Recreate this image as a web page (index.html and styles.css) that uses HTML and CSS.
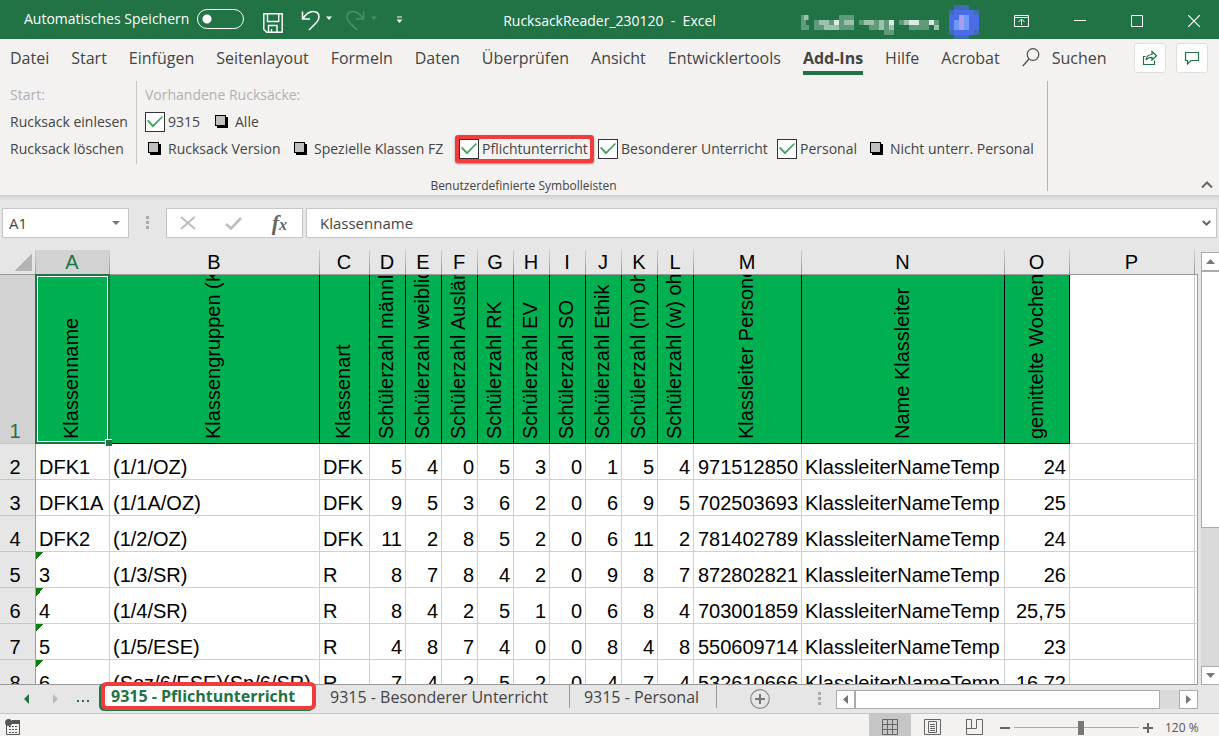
FILE: index.html
```html
<!DOCTYPE html>
<html lang="de">
<head>
<meta charset="utf-8">
<title>RucksackReader_230120 - Excel</title>
<link rel="stylesheet" href="styles.css">
</head>
<body>
<header class="titlebar">
  <div class="quick">
    <label class="autosave">Automatisches Speichern <input type="checkbox" class="switch"></label>
    <button class="icon-btn save" aria-label="Speichern"><svg width="20" height="20" viewBox="0 0 20 20"><path d="M.8.8h18.4v18.4H3.6L.8 16.400zM4.500 1v7.500h11.200V1M5.500 19v-6.500h8.500V19M8.500 19v-3" fill="none" stroke="#fff" stroke-width="1.400"/></svg></button>
    <button class="icon-btn undo" aria-label="Rückgängig"><svg width="32" height="21" viewBox="0 0 32 21"><path d="M1.500 1.500v7.500h7.500M2 8.500C5 4 8 1.500 12 1.500c4 0 6 2.500 6 5.500 0 3-1 4-3 6l-7 7" fill="none" stroke="#fff" stroke-width="1.500"/><path d="M25 6.500h6l-3 3.500z" fill="#fff"/></svg></button>
    <button class="icon-btn redo" aria-label="Wiederholen"><svg width="32" height="21" viewBox="0 0 32 21"><path d="M17.500 1.500v7.500H10M17 8.500C14 4 11 1.500 7 1.500c-4 0-6 2.500-6 5.500 0 3 1 4 3 6l7 7" fill="none" stroke="#4d8f6a" stroke-width="1.500"/><path d="M25 6.500h6l-3 3.500z" fill="#4d8f6a"/></svg></button>
    <button class="icon-btn" aria-label="Symbolleiste anpassen"><svg width="7" height="8" viewBox="0 0 7 8"><path d="M1 1h5" stroke="#fff"/><path d="M.5 3.500h6L3.500 7z" fill="#fff"/></svg></button>
  </div>
  <h1 class="doc-title">RucksackReader_230120&nbsp; - &nbsp;Excel</h1>
  <div class="window-side">
    <button class="account" aria-label="Konto">
      <svg width="181" height="36" viewBox="0 0 181 36" shape-rendering="crispEdges">
        <g fill="#5f9a7b"><path d="M0 10h8v5H0zM0 15h5v5H0zM0 20h8v5H0zM13 15h40v10H13zM38 10h15v5H38zM58 15h35v5H58zM68 20h25v5H68zM83 25h10v5H83zM98 15h40v5H98zM108 20h20v5h-20z"/></g>
        <g fill="#9cc1ad"><path d="M3 10h4v5H3zM18 15h10v5H18zM23 20h15v5H23zM43 15h10v5H43zM63 15h10v5H63zM78 15h5v10h-5zM88 15h5v10h-5zM103 15h15v5h-15zM128 15h5v5h-5zM133 20h5v5h-5z"/></g>
        <g fill="#dcebe2"><path d="M33 15h5v5h-5zM108 15h10v5h-10zM128 15h5v5h-5zM88 15h5v5h-5z"/></g>
        <g fill="#3f6db0"><path d="M153 0h15v5h-15zM148 5h30v25h-30zM153 30h15v5h-15z"/></g>
        <path d="M153 5h20v25h-20zM148 10h30v15h-30z" fill="#4a6ce8"/>
        <path d="M153 15h5v10h-5zM163 10h5v15h-5z" fill="#6f9af5"/><path d="M158 10h5v15h-5z" fill="#a99cf0"/>
        <path d="M0 35h181v1H0z" fill="#8ab99e"/>
      </svg>
    </button>
    <button class="icon-btn" aria-label="Menüband-Anzeigeoptionen"><svg width="15" height="12" viewBox="0 0 15 12"><path d="M.5.5h14v11H.5zM.5 2.500h14M7.500 10V4.500M4.500 7l3-3 3 3" fill="none" stroke="#fff"/></svg></button>
    <button class="icon-btn" aria-label="Minimieren"><svg width="12" height="12" viewBox="0 0 12 12"><path d="M0 5.500h12" stroke="#fff"/></svg></button>
    <button class="icon-btn" aria-label="Maximieren"><svg width="12" height="12" viewBox="0 0 12 12"><path d="M.5.5h11v11H.5z" fill="none" stroke="#fff"/></svg></button>
    <button class="icon-btn" aria-label="Schließen"><svg width="12" height="12" viewBox="0 0 12 12"><path d="M0 0l12 12M12 0L0 12" stroke="#fff" stroke-width="1.200"/></svg></button>
  </div>
</header>

<nav class="tabs">
  <button class="tab">Datei</button>
  <button class="tab">Start</button>
  <button class="tab">Einfügen</button>
  <button class="tab">Seitenlayout</button>
  <button class="tab">Formeln</button>
  <button class="tab">Daten</button>
  <button class="tab">Überprüfen</button>
  <button class="tab">Ansicht</button>
  <button class="tab">Entwicklertools</button>
  <button class="tab tab-active">Add-Ins</button>
  <button class="tab">Hilfe</button>
  <button class="tab">Acrobat</button>
  <button class="tab search"><svg width="18" height="19" viewBox="0 0 18 19"><circle cx="11" cy="6.500" r="5.800" fill="none" stroke="#555" stroke-width="1.300"/><path d="M7 11L.8 18" stroke="#555" stroke-width="1.400"/></svg>Suchen</button>
  <div class="tab-actions">
    <button class="action" aria-label="Freigeben"><svg width="16" height="16" viewBox="0 0 16 16" fill="none" stroke="#217346" stroke-width="1.200"><path d="M3.500 6.500h-2v8h11v-4"/><path d="M4 10c.5-3.500 2.500-5.500 6-5.500V1.500l4.500 4.300L10 10V7.300C7.500 7.300 5.500 8 4 10z"/></svg></button>
    <button class="action" aria-label="Kommentare"><svg width="16" height="14" viewBox="0 0 16 14"><path d="M1.500 1.500h13v8H7l-3.500 3.500V9.500h-2z" fill="none" stroke="#217346" stroke-width="1.200"/></svg></button>
  </div>
</nav>

<section class="ribbon">
  <div class="ribbon-body">
    <div class="ribbon-groups">
      <div class="group group-start">
        <span class="caption">Start:</span>
        <button class="command">Rucksack einlesen</button>
        <button class="command">Rucksack löschen</button>
      </div>
      <div class="group group-packs">
        <span class="caption">Vorhandene Rucksäcke:</span>
        <div class="choices choices-top">
          <label class="choice"><input type="checkbox" class="tick" checked>9315</label>
          <label class="choice choice-block"><input type="checkbox" class="block">Alle</label>
        </div>
        <div class="choices choices-main">
          <label class="choice choice-block"><input type="checkbox" class="block">Rucksack Version</label>
          <label class="choice choice-block"><input type="checkbox" class="block">Spezielle Klassen FZ</label>
          <label class="choice choice-marked"><input type="checkbox" class="tick" checked>Pflichtunterricht</label>
          <label class="choice"><input type="checkbox" class="tick" checked>Besonderer Unterricht</label>
          <label class="choice"><input type="checkbox" class="tick" checked>Personal</label>
          <label class="choice choice-block"><input type="checkbox" class="block">Nicht unterr. Personal</label>
        </div>
      </div>
    </div>
    <div class="ribbon-label">Benutzerdefinierte Symbolleisten</div>
  </div>
  <button class="icon-btn collapse" aria-label="Menüband reduzieren"><svg width="12" height="8" viewBox="0 0 12 8"><path d="M1 6.500l5-5 5 5" fill="none" stroke="#666" stroke-width="2"/></svg></button>
</section>

<section class="formula">
  <div class="field name-box"><input type="text" value="A1" aria-label="Namenfeld"><svg width="8" height="4" viewBox="0 0 8 4"><path d="M0 0h8L4 4z" fill="#777"/></svg></div>
  <svg class="grip" width="4" height="14" viewBox="0 0 4 14"><path d="M0 0h3v3H0zM0 5h3v3H0zM0 10h3v3H0z" fill="#aaa"/></svg>
  <div class="field formula-tools">
    <button class="icon-btn" aria-label="Abbrechen"><svg width="16" height="14" viewBox="0 0 16 14"><path d="M1 1l14 12M14.500 1L1 13" stroke="#bdbdbd" stroke-width="2"/></svg></button>
    <button class="icon-btn" aria-label="Eingeben"><svg width="17" height="13" viewBox="0 0 17 13"><path d="M1 7l5 4.500L16 1" fill="none" stroke="#bdbdbd" stroke-width="2.600"/></svg></button>
    <button class="icon-btn fx" aria-label="Funktion einfügen">f<span class="fx-x">x</span></button>
  </div>
  <div class="field formula-input"><input type="text" value="Klassenname" aria-label="Bearbeitungsleiste"><svg width="9" height="6" viewBox="0 0 9 6"><path d="M.8 1l3.700 3.500L8.200 1" fill="none" stroke="#666" stroke-width="2"/></svg></div>
</section>

<main class="sheet">
  <div class="grid">
    <table class="cells">
      <colgroup><col class="w-row"><col class="w-a"><col class="w-b"><col class="w-c"><col class="w-n" span="9"><col class="w-m"><col class="w-name"><col class="w-o"><col><col class="w-rest"></colgroup>
      <thead>
        <tr class="letters"><th class="corner"></th><th class="picked">A</th><th>B</th><th>C</th><th>D</th><th>E</th><th>F</th><th>G</th><th>H</th><th>I</th><th>J</th><th>K</th><th>L</th><th>M</th><th>N</th><th>O</th><th>P</th><th class="last"></th></tr>
      </thead>
      <tbody>
        <tr class="heads"><th class="picked">1</th><td class="selected"><div class="up">Klassenname</div></td><td><div class="up">Klassengruppen (Kurz)</div></td><td><div class="up">Klassenart</div></td><td><div class="up">Schülerzahl männlich</div></td><td><div class="up">Schülerzahl weiblich</div></td><td><div class="up">Schülerzahl Ausländer</div></td><td><div class="up">Schülerzahl RK</div></td><td><div class="up">Schülerzahl EV</div></td><td><div class="up">Schülerzahl SO</div></td><td><div class="up">Schülerzahl Ethik</div></td><td><div class="up">Schülerzahl (m) ohne</div></td><td><div class="up">Schülerzahl (w) ohne</div></td><td><div class="up">Klassleiter Personennr</div></td><td><div class="up">Name Klassleiter</div></td><td><div class="up">gemittelte Wochenstd</div></td><td class="empty"></td><td class="empty"></td></tr>
        <tr><th>2</th><td>DFK1</td><td>(1/1/OZ)</td><td>DFK</td><td class="num">5</td><td class="num">4</td><td class="num">0</td><td class="num">5</td><td class="num">3</td><td class="num">0</td><td class="num">1</td><td class="num">5</td><td class="num">4</td><td class="num">971512850</td><td>KlassleiterNameTemp</td><td class="num">24</td><td></td><td></td></tr>
        <tr><th>3</th><td>DFK1A</td><td>(1/1A/OZ)</td><td>DFK</td><td class="num">9</td><td class="num">5</td><td class="num">3</td><td class="num">6</td><td class="num">2</td><td class="num">0</td><td class="num">6</td><td class="num">9</td><td class="num">5</td><td class="num">702503693</td><td>KlassleiterNameTemp</td><td class="num">25</td><td></td><td></td></tr>
        <tr><th>4</th><td>DFK2</td><td>(1/2/OZ)</td><td>DFK</td><td class="num">11</td><td class="num">2</td><td class="num">8</td><td class="num">5</td><td class="num">2</td><td class="num">0</td><td class="num">6</td><td class="num">11</td><td class="num">2</td><td class="num">781402789</td><td>KlassleiterNameTemp</td><td class="num">24</td><td></td><td></td></tr>
        <tr><th>5</th><td class="flag">3</td><td>(1/3/SR)</td><td>R</td><td class="num">8</td><td class="num">7</td><td class="num">8</td><td class="num">4</td><td class="num">2</td><td class="num">0</td><td class="num">9</td><td class="num">8</td><td class="num">7</td><td class="num">872802821</td><td>KlassleiterNameTemp</td><td class="num">26</td><td></td><td></td></tr>
        <tr><th>6</th><td class="flag">4</td><td>(1/4/SR)</td><td>R</td><td class="num">8</td><td class="num">4</td><td class="num">2</td><td class="num">5</td><td class="num">1</td><td class="num">0</td><td class="num">6</td><td class="num">8</td><td class="num">4</td><td class="num">703001859</td><td>KlassleiterNameTemp</td><td class="num">25,75</td><td></td><td></td></tr>
        <tr><th>7</th><td class="flag">5</td><td>(1/5/ESE)</td><td>R</td><td class="num">4</td><td class="num">8</td><td class="num">7</td><td class="num">4</td><td class="num">0</td><td class="num">0</td><td class="num">8</td><td class="num">4</td><td class="num">8</td><td class="num">550609714</td><td>KlassleiterNameTemp</td><td class="num">23</td><td></td><td></td></tr>
        <tr><th>8</th><td class="flag">6</td><td>(Soz/6/ESE)(Sp/6/SR)</td><td>R</td><td class="num">7</td><td class="num">4</td><td class="num">2</td><td class="num">5</td><td class="num">2</td><td class="num">0</td><td class="num">4</td><td class="num">7</td><td class="num">4</td><td class="num">532610666</td><td>KlassleiterNameTemp</td><td class="num">16,72</td><td></td><td></td></tr>
      </tbody>
    </table>
  </div>
  <div class="vscroll">
    <button class="scroll-btn" aria-label="Nach oben"><svg width="9" height="5" viewBox="0 0 9 5"><path d="M0 5h9L4.500 0z" fill="#777"/></svg></button>
    <div class="vtrack"><div class="vthumb"></div></div>
    <button class="scroll-btn" aria-label="Nach unten"><svg width="9" height="5" viewBox="0 0 9 5"><path d="M0 0h9L4.500 5z" fill="#777"/></svg></button>
  </div>
</main>

<section class="sheetbar">
  <div class="sheet-nav">
    <button class="icon-btn" aria-label="Vorheriges Blatt"><svg width="5" height="10" viewBox="0 0 5 10"><path d="M5 0v10L0 5z" fill="#217346"/></svg></button>
    <button class="icon-btn" aria-label="Nächstes Blatt"><svg width="5" height="10" viewBox="0 0 5 10"><path d="M0 0v10l5-5z" fill="#bbb"/></svg></button>
    <button class="icon-btn" aria-label="Weitere Blätter"><svg width="14" height="10" viewBox="0 0 14 10"><path d="M1 6h2v2H1zM6 6h2v2H6zM11 6h2v2h-2z" fill="#217346"/></svg></button>
  </div>
  <button class="sheet-tab sheet-active">9315 - Pflichtunterricht</button>
  <button class="sheet-tab sheet-second">9315 - Besonderer Unterricht</button>
  <button class="sheet-tab sheet-third">9315 - Personal</button>
  <button class="icon-btn add-sheet" aria-label="Neues Blatt"><svg width="20" height="20" viewBox="0 0 20 20"><circle cx="10" cy="10" r="9.300" fill="none" stroke="#888" stroke-width="1.200"/><path d="M10 5v10M5 10h10" stroke="#777" stroke-width="2"/></svg></button>
  <div class="hscroll-area">
    <svg class="grip" width="4" height="14" viewBox="0 0 4 14"><path d="M0 0h3v3H0zM0 5h3v3H0zM0 10h3v3H0z" fill="#aaa"/></svg>
    <div class="hscroll">
      <button class="scroll-btn" aria-label="Nach links"><svg width="5" height="9" viewBox="0 0 5 9"><path d="M5 0v9L0 4.500z" fill="#777"/></svg></button>
      <div class="htrack"><div class="hthumb"></div></div>
      <button class="scroll-btn" aria-label="Nach rechts"><svg width="5" height="9" viewBox="0 0 5 9"><path d="M0 0v9l5-4.500z" fill="#777"/></svg></button>
    </div>
  </div>
</section>

<footer class="status">
  <button class="icon-btn macro" aria-label="Makro aufzeichnen"><svg width="16" height="16" viewBox="0 0 16 16"><path d="M1.500 6v9.500h13V2.500" fill="none" stroke="#555"/><path d="M7 1h8v4H7z" fill="#555"/><circle cx="3.600" cy="3.600" r="3.500" fill="#555"/><path d="M4 7.500h9M4 10.500h9M4 13.500h9" stroke="#555" stroke-dasharray="2 1"/></svg></button>
  <div class="views">
    <button class="view view-on" aria-label="Normal"><svg width="16" height="16" viewBox="0 0 16 16"><path d="M.5.5h15v15H.5zM5.500 0v16M10.500 0v16M0 5.500h16M0 10.500h16" fill="none" stroke="#666"/></svg></button>
    <button class="view" aria-label="Seitenlayout"><svg width="17" height="16" viewBox="0 0 17 16"><path d="M.5.5h16v15H.5zM4.500 2.500h8v11h-8zM6 5.500h5M6 7.500h5M6 9.500h5M6 11.500h5" fill="none" stroke="#666"/></svg></button>
    <button class="view" aria-label="Umbruchvorschau"><svg width="17" height="16" viewBox="0 0 17 16"><path d="M.5 0v15.500h16V.5h-6v9h-5V.5H1M.5 9.500h5" fill="none" stroke="#666"/></svg></button>
  </div>
  <div class="zoom">
    <button class="icon-btn" aria-label="Verkleinern"><svg width="10" height="10" viewBox="0 0 10 10"><path d="M0 5h10" stroke="#666" stroke-width="2"/></svg></button>
    <input type="range" class="zoom-range" min="0" max="100" value="54" aria-label="Zoom">
    <button class="icon-btn" aria-label="Vergrößern"><svg width="10" height="10" viewBox="0 0 10 10"><path d="M0 5h10M5 0v10" stroke="#666" stroke-width="2"/></svg></button>
    <button class="zoom-value">120 %</button>
  </div>
</footer>
</body>
</html>
```
FILE: styles.css
```css
* { box-sizing: border-box; }

body {
  margin: 0;
  height: 100vh;
  display: flex;
  flex-direction: column;
  overflow: hidden;
  background: #e6e6e6;
  color: #444;
  font: 14px/20px "Open Sans", "Noto Sans", sans-serif;
}

button, input {
  margin: 0;
  padding: 0;
  border: 0;
  background: none;
  color: inherit;
  font: inherit;
}

svg { display: block; flex: none; }

.icon-btn { display: flex; align-items: center; justify-content: center; flex: none; }

/* Title bar */
.titlebar {
  height: 39px;
  flex: none;
  display: grid;
  grid-template-columns: 1fr auto 1fr;
  background: #217346;
  color: #fff;
}

.quick { display: flex; align-items: center; padding: 0 0 6px 24px; }
.autosave { display: flex; align-items: center; gap: 8px; margin-top: -2px; white-space: nowrap; }

.switch {
  appearance: none;
  width: 47px;
  height: 20px;
  border: 1px solid #fff;
  border-radius: 10px;
  background: radial-gradient(circle at 9px 9px, #fff 4px, transparent 5px);
}

.save { margin: 5px 0 0 19px; }
.undo { margin: 0 0 0 18px; }
.redo { margin: 0 18px 0 13px; }
.doc-title { margin: 0; padding-bottom: 5px; align-self: center; font-size: 14px; font-weight: 400; }
.window-side { display: flex; align-items: center; justify-content: flex-end; padding: 0 19px 5px 0; gap: 45px; }
.account { margin: 5px -13px 0 0; }

/* Ribbon tabs */
.tabs { display: flex; flex: none; height: 39px; padding: 0 11px 0 10px; gap: 22px; background: #f3f2f1; font-size: 16px; }
.tab { height: 36px; padding-top: 5px; border: solid transparent; border-width: 0 0 4px; white-space: nowrap; }
.tab-active { border-color: #217346; font-weight: 700; }
.search { display: flex; align-items: center; gap: 12px; }
.tab-actions { display: flex; gap: 10px; margin: 4px 0 0 auto; }

.action {
  display: flex;
  align-items: center;
  justify-content: center;
  width: 32px;
  height: 30px;
  border: 1px solid #e1dfdd;
  border-radius: 3px;
  background: #fff;
}

/* Ribbon body */
.ribbon { display: flex; flex: none; height: 117px; background: #f3f2f1; justify-content: space-between; }
.ribbon-body { margin: 3px 0 4px; width: 1048px; border-right: 1px solid #b1b1b1; }
.ribbon-groups { display: flex; height: 93px; }
.group { display: grid; grid-template-rows: 27px 27px 27px; align-items: center; justify-items: start; white-space: nowrap; height: 83px; }
.group-start { width: 137px; padding-left: 10px; border-right: 1px solid #c8c6c4; }
.group-packs { padding-left: 8px; }
.caption { color: #b1b1b1; }
.choices-top { display: grid; grid-template-columns: 67px auto; }
.choices-main { display: grid; grid-template-columns: 146px 168px 139px 179px 90px auto; }
.choice { display: flex; align-items: center; gap: 3px; height: 20px; }
.choice-block { gap: 7px; padding-left: 3px; }
.choice-marked { justify-self: start; border-radius: 1px; box-shadow: 0 0 0 4px #f23c3c, 0 1px 2px 4px #888; padding-right: 2px; }

.tick {
  appearance: none;
  display: grid;
  place-items: center;
  width: 20px;
  height: 20px;
  border: 1px solid #333;
  background: #fff;
}

.tick:checked::before {
  content: "";
  width: 16px;
  height: 11px;
  background: #3fa45b;
  clip-path: polygon(0 45%, 8% 35%, 38% 80%, 93% 0, 100% 10%, 40% 100%, 34% 100%);
}

.block { appearance: none; width: 11px; height: 11px; margin: 0 2px 2px 0; border: 1px solid #000; background: #c0c0c0; box-shadow: 2px 2px 0 #000; }
.ribbon-label { text-align: center; font-size: 12px; line-height: 24px; }
.collapse { align-self: flex-end; margin: 0 6px 6px 0; }

/* Formula bar */
.formula { display: flex; flex: none; align-items: flex-start; height: 55px; padding: 12px 2px 0; border-top: 1px solid #cfcfcf; background: linear-gradient(#d4d4d4, #e6e6e6 5px); font-size: 15px; }
.field { display: flex; align-items: center; height: 30px; border: 1px solid #c6c6c6; background: #fff; }
.name-box { width: 127px; padding: 0 8px 0 6px; }
.name-box input { flex: 1; min-width: 0; }
.formula .grip { margin: 8px 16px 0 17px; }
.formula-tools { width: 137px; padding: 0 15px 0 13px; justify-content: space-between; color: #666; }
.formula-input { flex: 1; margin-left: 3px; padding: 0 5px 0 13px; }
.formula-input input { flex: 1; min-width: 0; }
.fx { font: italic 700 22px/24px "Liberation Serif", serif; }
.fx-x { font-size: 16px; padding-top: 4px; }

/* Worksheet */
.sheet { display: flex; flex: 1; min-height: 0; }
.grid { flex: 1; min-width: 0; overflow: hidden; border-bottom: 1px solid #999; }
.cells { width: 100%; table-layout: fixed; border-collapse: separate; border-spacing: 0; font: 20px/24px "Liberation Sans", Arial, sans-serif; color: #000; }
.w-row { width: 36px; }
.w-a { width: 74px; }
.w-b { width: 210px; }
.w-c { width: 50px; }
.w-n { width: 36px; }
.w-m { width: 108px; }
.w-name { width: 203px; }
.w-o { width: 65px; }
.w-rest { width: 3px; }

.cells th, .cells td { height: 36px; padding: 0 3px; font-weight: 400; vertical-align: bottom; white-space: nowrap; border: solid #d0d0d0; border-width: 0 1px 1px 0; }
.cells td { background: #fff; text-align: left; }
.cells tbody th { padding: 0 5px 0 0; border-color: #c6c6c6 #999 #c6c6c6 #c6c6c6; background: #e6e6e6; }
.cells td:last-child { border-right-color: #999; }
.cells .num { text-align: right; padding: 0 3px 0 0; }
.cells .letters th { height: 25px; padding: 0 2px 0 0; border-right: 0; border-bottom-color: #999; background: linear-gradient(#d0d0d0, #999) no-repeat right / 1px 100%; }
.cells .letters .last { background: none; }
.cells .letters .corner { background: linear-gradient(135deg, transparent 50%, #b4b4b4 50%) no-repeat 15px 4px / 17px 17px, linear-gradient(#d0d0d0, #999) no-repeat right / 1px 100%; }
.cells .letters .picked, .cells tbody .picked { background-color: #d2d2d2; color: #217346; }
.cells .heads th { height: 169px; }
.cells .heads td { padding: 0 3px 0 0; border-color: #000; background: #00b050; }
.cells .heads .empty { padding: 0; background: #fff; border-color: #d0d0d0; }
.cells .heads .empty:last-child { border-right-color: #999; }

.up { height: 168px; width: 24px; margin: 0 auto; padding-top: 4px; overflow: hidden; writing-mode: vertical-rl; transform: rotate(180deg); }

.selected { position: relative; }
.selected::before { content: ""; position: absolute; inset: -1px -1px -1px -1px; border: 2px solid #217346; box-shadow: inset 0 0 0 1px #fff; }
.selected::after { content: ""; position: absolute; right: -3px; bottom: -3px; width: 6px; height: 6px; background: #217346; border: solid #fff; border-width: 1px 0 0 1px; }
.cells .flag { background: linear-gradient(135deg, #107c10 50%, #fff 50%) no-repeat 0 0 / 8px 8px #fff; }

.vscroll { display: flex; flex-direction: column; width: 18px; margin: 2px 0 0 3px; }
.scroll-btn { display: flex; align-items: center; justify-content: center; flex: none; width: 19px; height: 19px; border: 1px solid #ababab; background: #fff; }
.vtrack { flex: 1; background: #dadada; }
.vthumb { height: 65%; width: 19px; border: 1px solid #ababab; background: #fff; }

/* Sheet tabs */
.sheetbar { display: flex; flex: none; height: 29px; border-bottom: 1px solid #c6c6c6; font-size: 16px; }
.sheet-nav { display: flex; align-items: center; width: 103px; padding-left: 24px; gap: 24px; flex: none; }
.sheet-nav .icon-btn:last-child { margin-left: -6px; }
.sheet-tab { height: 23px; padding: 0 14px; line-height: 20px; white-space: nowrap; border-right: 1px solid #999; }
.sheet-active { position: relative; width: 207px; height: 20px; padding: 0 6px; margin: 1px 4px 0 2px; border: 0; background: #fff; color: #217346; font-weight: 700; text-align: left; border-radius: 2px; box-shadow: 0 0 0 4px #f23c3c, -2px 1px 0 4px #217346; }
.sheet-second { padding-right: 21px; }
.sheet-third { padding-right: 17px; }
.add-sheet { margin: 0 0 0 33px; }
.hscroll-area { display: flex; align-items: center; margin-left: auto; width: 380px; margin-right: 21px; }
.hscroll-area .grip { margin-right: 14px; }
.hscroll { display: flex; flex: 1; }
.htrack { flex: 1; background: #dadada; }
.hthumb { width: 94%; height: 19px; border: 1px solid #ababab; background: #fff; }

/* Status bar */
.status { display: flex; flex: none; align-items: center; height: 22px; background: #f3f2f1; color: #555; font-size: 12px; }
.macro { margin: 3px 0 0 5px; }
.views { display: flex; align-self: stretch; margin-left: auto; }
.view { display: flex; align-items: center; justify-content: center; width: 42px; padding-top: 4px; }
.view-on { background: #c6c6c6; }
.zoom { display: flex; align-items: center; width: 219px; margin-left: 5px; padding-top: 5px; gap: 4px; }
.zoom-range { appearance: none; width: 125px; height: 14px; background: linear-gradient(#aaa, #aaa) no-repeat center / 100% 1px; }
.zoom-range::-webkit-slider-thumb { appearance: none; width: 6px; height: 14px; background: #777; }
.zoom-value { margin-left: 8px; }
```
